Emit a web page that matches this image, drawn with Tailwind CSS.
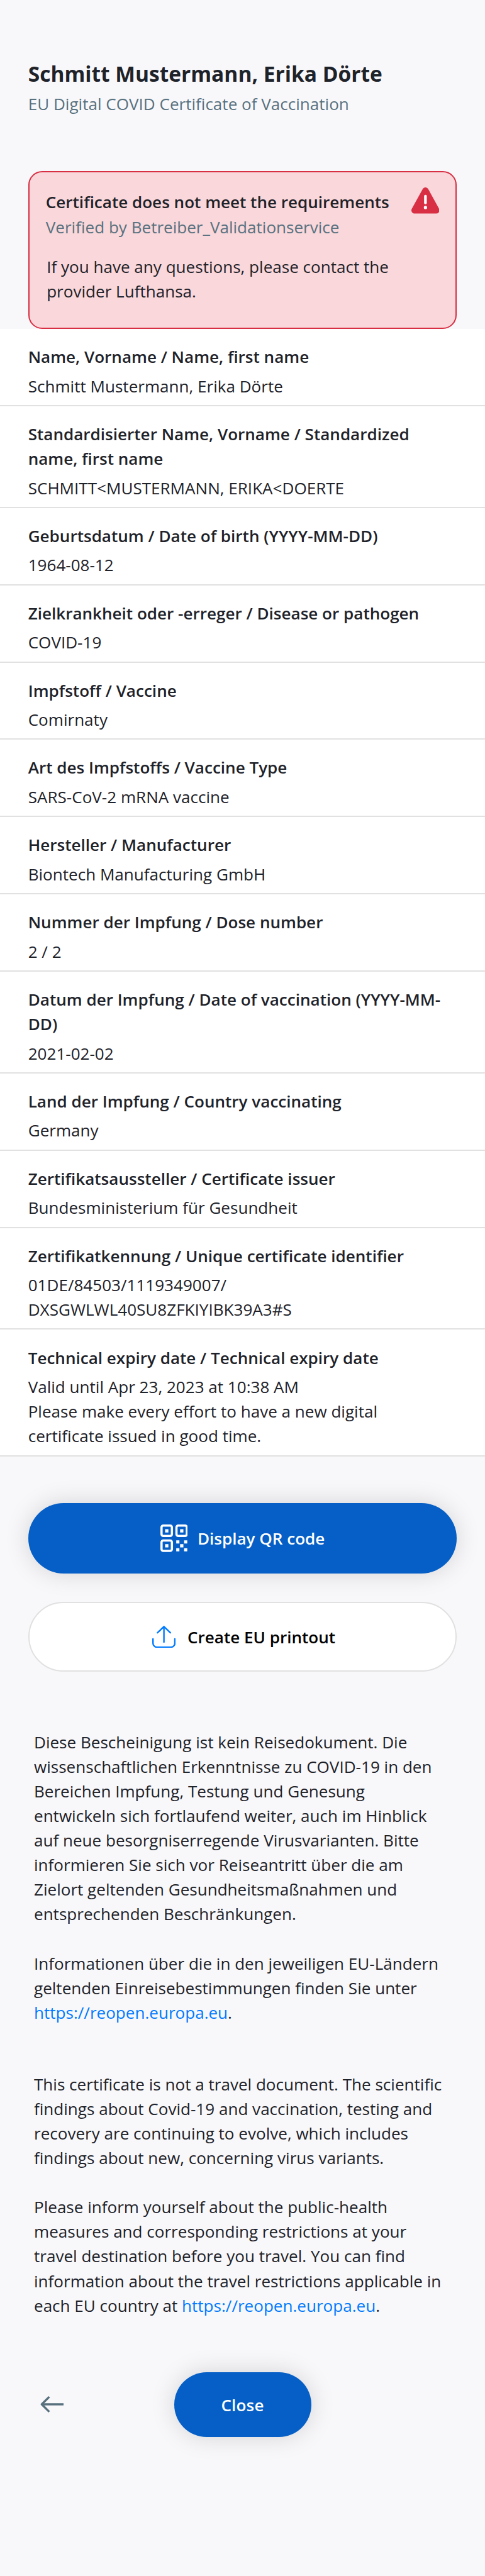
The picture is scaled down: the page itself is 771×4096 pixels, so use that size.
<!DOCTYPE html>
<html lang="en">
<head>
<meta charset="utf-8">
<title>EU Digital COVID Certificate</title>
<script src="https://cdn.jsdelivr.net/npm/@tailwindcss/browser@4"></script>
</head>
<body class="bg-[#f8f8fa]">
<main class="w-[771px] h-[4096px] overflow-hidden bg-[#f8f8fa] text-[#1e2229] font-['Open_Sans',sans-serif] text-[26.07px] leading-[39.1px]">
  <header class="px-[44.7px] pt-[93px]">
    <h1 class="text-[33.52px] leading-[48px] font-bold whitespace-nowrap">Schmitt Mustermann, Erika Dörte</h1>
    <p class="mt-[4.9px] text-[#58717f] whitespace-nowrap">EU Digital COVID Certificate of Vaccination</p>
  </header>

  <section class="mx-[44.7px] mt-[87.1px] h-[251px] rounded-[22px] border-2 border-[#d82f44] bg-[#f9d7da] pl-[26.1px] pr-[26px] pt-[28.4px] flex justify-between items-start">
    <div>
      <h2 class="font-semibold whitespace-nowrap">Certificate does not meet the requirements</h2>
      <p class="text-[#58717f]">Verified by Betreiber_Validationservice</p>
      <p class="mt-[24.4px] ml-[1.4px] whitespace-nowrap">If you have any questions, please contact the<br>provider Lufthansa.</p>
    </div>
    <svg class="w-[44.7px] h-[41.9px] shrink-0 -mt-[4.4px]" viewBox="0 0 48 45" fill="none">
      <path d="M24 5.5 5.5 39.2h37Z" fill="#d82f44" stroke="#d82f44" stroke-width="11" stroke-linejoin="round"/>
      <path d="M24 15v11.5" stroke="#fff" stroke-width="4.6" stroke-linecap="round"/>
      <circle cx="24" cy="34.3" r="2.8" fill="#fff"/>
    </svg>
  </section>

  <dl class="bg-white">
    <div class="border-b-2 border-[#e1e1e2] px-[44.7px] pt-[25.1px] pb-[10.18px]"><dt class="font-semibold">Name, Vorname / Name, first name</dt><dd class="mt-[7.4px]">Schmitt Mustermann, Erika Dörte</dd></div>
    <div class="border-b-2 border-[#e1e1e2] px-[44.7px] pt-[25.1px] pb-[10.18px]"><dt class="font-semibold">Standardisierter Name, Vorname / Standardized<br>name, first name</dt><dd class="mt-[7.4px]">SCHMITT&lt;MUSTERMANN, ERIKA&lt;DOERTE</dd></div>
    <div class="border-b-2 border-[#e1e1e2] px-[44.7px] pt-[25.1px] pb-[10.18px]"><dt class="font-semibold">Geburtsdatum / Date of birth (YYYY-MM-DD)</dt><dd class="mt-[7.4px]">1964-08-12</dd></div>
    <div class="border-b-2 border-[#e1e1e2] px-[44.7px] pt-[25.1px] pb-[10.18px]"><dt class="font-semibold">Zielkrankheit oder -erreger / Disease or pathogen</dt><dd class="mt-[7.4px]">COVID-19</dd></div>
    <div class="border-b-2 border-[#e1e1e2] px-[44.7px] pt-[25.1px] pb-[10.18px]"><dt class="font-semibold">Impfstoff / Vaccine</dt><dd class="mt-[7.4px]">Comirnaty</dd></div>
    <div class="border-b-2 border-[#e1e1e2] px-[44.7px] pt-[25.1px] pb-[10.18px]"><dt class="font-semibold">Art des Impfstoffs / Vaccine Type</dt><dd class="mt-[7.4px]">SARS-CoV-2 mRNA vaccine</dd></div>
    <div class="border-b-2 border-[#e1e1e2] px-[44.7px] pt-[25.1px] pb-[10.18px]"><dt class="font-semibold">Hersteller / Manufacturer</dt><dd class="mt-[7.4px]">Biontech Manufacturing GmbH</dd></div>
    <div class="border-b-2 border-[#e1e1e2] px-[44.7px] pt-[25.1px] pb-[10.18px]"><dt class="font-semibold">Nummer der Impfung / Dose number</dt><dd class="mt-[7.4px]">2 / 2</dd></div>
    <div class="border-b-2 border-[#e1e1e2] px-[44.7px] pt-[25.1px] pb-[10.18px]"><dt class="font-semibold whitespace-nowrap">Datum der Impfung / Date of vaccination (YYYY-MM-<br>DD)</dt><dd class="mt-[7.4px]">2021-02-02</dd></div>
    <div class="border-b-2 border-[#e1e1e2] px-[44.7px] pt-[25.1px] pb-[10.18px]"><dt class="font-semibold">Land der Impfung / Country vaccinating</dt><dd class="mt-[7.4px]">Germany</dd></div>
    <div class="border-b-2 border-[#e1e1e2] px-[44.7px] pt-[25.1px] pb-[10.18px]"><dt class="font-semibold">Zertifikatsaussteller / Certificate issuer</dt><dd class="mt-[7.4px]">Bundesministerium für Gesundheit</dd></div>
    <div class="border-b-2 border-[#e1e1e2] px-[44.7px] pt-[25.1px] pb-[10.18px]"><dt class="font-semibold">Zertifikatkennung / Unique certificate identifier</dt><dd class="mt-[7.4px]">01DE/84503/1119349007/<br>DXSGWLWL40SU8ZFKIYIBK39A3#S</dd></div>
    <div class="border-b-2 border-[#e1e1e2] px-[44.7px] pt-[25.1px] pb-[10.18px]"><dt class="font-semibold">Technical expiry date / Technical expiry date</dt><dd class="mt-[7.4px]">Valid until Apr 23, 2023 at 10:38 AM<br>Please make every effort to have a new digital<br>certificate issued in good time.</dd></div>
  </dl>

  <div class="px-[44.7px] pt-[74.8px] flex flex-col gap-[44.7px]">
    <button class="h-[111.7px] rounded-full bg-[#055fc6] text-white font-semibold shadow-[0_0_38px_rgba(0,0,0,0.15)] flex items-center justify-center gap-[15.5px]">
      <svg class="w-[43.8px] h-[43.8px]" viewBox="0 0 47 47" fill="none">
        <g stroke="#fff" stroke-width="3.8"><rect x="1.9" y="1.9" width="17.7" height="17.7" rx="3"/><rect x="27.4" y="1.9" width="17.7" height="17.7" rx="3"/><rect x="1.9" y="27.4" width="17.7" height="17.7" rx="3"/></g>
        <path fill="#fff" d="M8 8h5.6v5.6H8zM33.6 8h5.6v5.6h-5.6zM8 33.6h5.6v5.6H8zM27 27h5.4v5.4H27zM40.4 27h5.4v5.4h-5.4zM33.6 33.6h5.6v5.6h-5.6zM27 40.4h5.4v5.4H27zM40.4 40.4h5.4v5.4h-5.4z"/>
      </svg>
      <span class="pt-[1.6px]">Display QR code</span>
    </button>
    <button class="h-[111.7px] rounded-full border-2 border-[#e1e1e2] bg-white text-black font-semibold flex items-center justify-center gap-[18.9px] pl-[4px]">
      <svg class="w-[37.2px] h-[35.4px]" viewBox="0 0 40 38" fill="none" stroke="#007aff" stroke-width="2.6" stroke-linecap="round" stroke-linejoin="round">
        <path d="M20 28V1.5M9 12 20 1.5 31 12M1.3 22.5v7.2a7 7 0 0 0 7 7h23.4a7 7 0 0 0 7-7v-7.2"/>
      </svg>
      <span class="pt-[1.6px]">Create EU printout</span>
    </button>
  </div>

  <section class="pl-[54px] mt-[92.3px] whitespace-nowrap">
    <p>Diese Bescheinigung ist kein Reisedokument. Die<br>wissenschaftlichen Erkenntnisse zu COVID-19 in den<br>Bereichen Impfung, Testung und Genesung<br>entwickeln sich fortlaufend weiter, auch im Hinblick<br>auf neue besorgniserregende Virusvarianten. Bitte<br>informieren Sie sich vor Reiseantritt über die am<br>Zielort geltenden Gesundheitsmaßnahmen und<br>entsprechenden Beschränkungen.</p>
    <p class="mt-[39.1px]">Informationen über die in den jeweiligen EU-Ländern<br>geltenden Einreisebestimmungen finden Sie unter<br><a class="text-[#007aff]">https://reopen.europa.eu</a>.</p>
    <p class="mt-[75px]">This certificate is not a travel document. The scientific<br>findings about Covid-19 and vaccination, testing and<br>recovery are continuing to evolve, which includes<br>findings about new, concerning virus variants.</p>
    <p class="mt-[39.1px]">Please inform yourself about the public-health<br>measures and corresponding restrictions at your<br>travel destination before you travel. You can find<br>information about the travel restrictions applicable in<br>each EU country at <a class="text-[#007aff]">https://reopen.europa.eu</a>.</p>
  </section>

  <footer class="mt-[86.4px] grid grid-cols-[1fr_218px_1fr] items-center">
    <svg class="ml-[63.5px] w-[37.5px] h-[26px]" viewBox="0 0 40 28" fill="none" stroke="#58717f" stroke-linejoin="round">
      <path stroke-width="4" d="M40 14H4"/>
      <path stroke-width="3.6" d="M15.2 1.2 2.3 14l12.9 12.8"/>
    </svg>
    <button class="h-[102.4px] pt-[1.6px] rounded-full bg-[#055fc6] text-white font-semibold tracking-[0.15px] shadow-[0_0_38px_rgba(0,0,0,0.15)]">Close</button>
  </footer>
</main>
</body>
</html>
